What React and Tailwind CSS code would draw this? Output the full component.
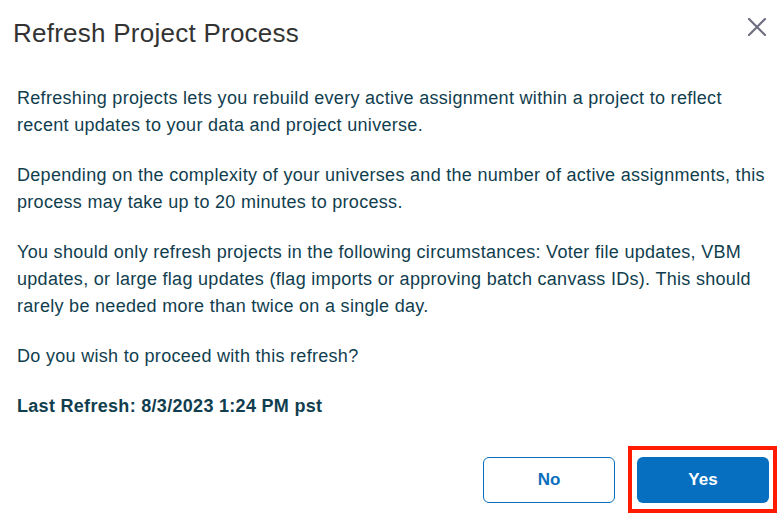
export default function App() {
  return (
    <div
      className="w-[784px] h-[518px] bg-white relative overflow-hidden flex flex-col"
      style={{ fontFamily: '"Liberation Sans", Arial, sans-serif' }}
    >
      {/* Header */}
      <div className="flex items-center justify-between pl-[13px] pr-[18px] pt-[17px]">
        <h1 className="text-[26px] leading-[32px] tracking-[0.25px] text-[#333333]">
          Refresh Project Process
        </h1>
        <button className="text-[#6e6e80] -mt-[12px]">
          <svg width="18" height="18" viewBox="0 0 18 18" stroke="currentColor" strokeWidth="2.2" strokeLinecap="round">
            <path d="M1 1 17 17M17 1 1 17" />
          </svg>
        </button>
      </div>

      {/* Body */}
      <div className="pl-[17px] pr-[16px] pt-[36px] text-[18px] leading-[27px] tracking-[0.3px] text-[#113e4e] flex flex-col gap-[23px]">
        <p>
          Refreshing projects lets you rebuild every active assignment within a
          project to reflect recent updates to your data and project universe.
        </p>
        <p>
          Depending on the complexity of your universes and the number of active
          assignments, this process may take up to 20 minutes to process.
        </p>
        <p>
          You should only refresh projects in the following circumstances: Voter
          file updates, VBM updates, or large flag updates (flag imports or
          approving batch canvass IDs). This should rarely be needed more than
          twice on a single day.
        </p>
        <p>Do you wish to proceed with this refresh?</p>
        <p className="font-bold">Last Refresh: 8/3/2023 1:24 PM pst</p>
      </div>

      {/* Footer */}
      <div className="mt-auto flex justify-end gap-[22px] pr-[15px] pb-[15px]">
        <button className="w-[132px] h-[46px] rounded-[6px] border border-[#0a6ebd] text-[#0a6ebd] font-bold text-[17px] bg-white">
          No
        </button>
        <button className="relative w-[132px] h-[46px] rounded-[6px] bg-[#066fc0] text-white font-bold text-[17px]">
          Yes
          <span className="absolute -left-[9px] -right-[8px] -top-[11px] -bottom-[10px] border-4 border-[#ff1a00] pointer-events-none" />
        </button>
      </div>
    </div>
  );
}
